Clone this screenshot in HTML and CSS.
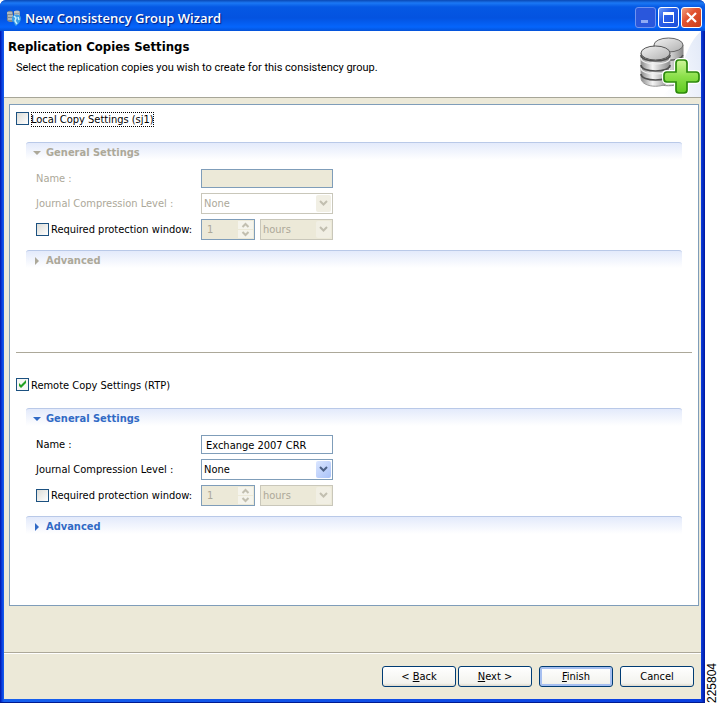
FILE: index.html
```html
<!DOCTYPE html>
<html lang="en">
<head>
<meta charset="utf-8">
<title>New Consistency Group Wizard</title>
<link rel="stylesheet" href="styles.css">
</head>
<body>
<main class="window">
  <header class="titlebar">
    <svg class="app-icon" viewBox="0 0 16 16" aria-hidden="true">
      <path d="M1 3c0-3 6-3 6 0v8c0 2-6 1-6-1z" fill="#7f8a92"/>
      <path d="M8 2c0-2 6-2 6 0v6H8z" fill="#98a2a8"/>
      <path d="M1 3h5M8 2h5M2 6h5M9 5h4M2 9h4" stroke="#dfe4e6" stroke-width="1.200"/>
      <path d="M6 8c0-4 8-5 9 0 0 4-3 6-5 8-2-1-1-4-4-5z" fill="#3a9fe6"/>
      <path d="M8 6l2 2-1 3 2 3M12 7l1 3" stroke="#c9f0ff" stroke-width="1.500" fill="none"/>
    </svg>
    <h1 class="title">New Consistency Group Wizard</h1>
    <div class="window-buttons">
      <button class="wb wb-min" aria-label="Minimize" disabled><svg viewBox="0 0 19 19"><path d="M5 12h7v3H5z" fill="#8fabf5"/></svg></button>
      <button class="wb" aria-label="Maximize"><svg viewBox="0 0 19 19"><path d="M4 4h11v11H4zM5 7v7h9V7z" fill="#fff" fill-rule="evenodd"/></svg></button>
      <button class="wb wb-close" aria-label="Close"><svg viewBox="0 0 19 19"><path d="M5 5l9 9M14 5l-9 9" stroke="#fff" stroke-width="2.200"/></svg></button>
    </div>
  </header>

  <section class="banner">
    <div class="banner-text">
      <h2 class="banner-title">Replication Copies Settings</h2>
      <p class="banner-note">Select the replication copies you wish to create for this consistency group.</p>
    </div>
    <svg class="banner-art" viewBox="0 0 72 66" aria-hidden="true">
      <defs>
        <linearGradient id="metal"><stop offset="0" stop-color="#8c8c8c"/><stop offset=".4" stop-color="#f4f4f4"/><stop offset="1" stop-color="#8a8a8a"/></linearGradient>
        <linearGradient id="lid" x2="1" y2="1"><stop offset="0" stop-color="#f2f2f2"/><stop offset="1" stop-color="#b0b0b0"/></linearGradient>
        <linearGradient id="plus" x2="0" y2="1"><stop offset="0" stop-color="#d0f59a"/><stop offset=".5" stop-color="#8be04a"/><stop offset="1" stop-color="#5fc91f"/></linearGradient>
        <linearGradient id="sky" x1="1" y1=".2" x2="0" y2=".6"><stop offset="0" stop-color="#e3eaf8"/><stop offset="1" stop-color="#fff"/></linearGradient>
      </defs>
      <path d="M72 0v66H28C55 58 50 20 72 0z" fill="url(#sky)"/>
      <path d="M25 14v34c0 9 29 9 29 0V14z" fill="url(#metal)" stroke="#888"/>
      <path d="M25 24c3 7 26 7 29 0M25 36c3 7 26 7 29 0" fill="none" stroke="#555" stroke-width="1.500"/>
      <ellipse cx="39.500" cy="14" rx="14.500" ry="7" fill="url(#lid)" stroke="#666"/>
      <path d="M12 22v25c0 11 29 11 29 0V22z" fill="url(#metal)" stroke="#999"/>
      <path d="M12 24c0 8 29 8 29 0M12 34c0 8 29 8 29 0M12 43c0 8 29 8 29 0" fill="none" stroke="#505050" stroke-width="1.700"/>
      <path d="M12 27c0 8 29 8 29 0M12 37c0 8 29 8 29 0" fill="none" stroke="#eee" stroke-width="1.200"/>
      <ellipse cx="26.500" cy="22" rx="14.500" ry="7" fill="url(#lid)" stroke="#555"/>
      <path d="M50 29h5q3 0 3 3v9h9q3 0 3 3v4q0 3-3 3h-9v8q0 3-3 3h-5q-3 0-3-3v-8h-9q-3 0-3-3v-4q0-3 3-3h9v-9q0-3 3-3z" fill="none" stroke="#fff" stroke-width="4"/>
      <path d="M50 29h5q3 0 3 3v9h9q3 0 3 3v4q0 3-3 3h-9v8q0 3-3 3h-5q-3 0-3-3v-8h-9q-3 0-3-3v-4q0-3 3-3h9v-9q0-3 3-3z" fill="url(#plus)" stroke="#2c8a0c" stroke-width="1.700"/>
    </svg>
  </section>

  <div class="content">
    <div class="panel">
      <section class="copy">
        <div class="copy-head">
          <input class="check" type="checkbox" id="local">
          <label class="focus-label" for="local">Local Copy Settings (sj1)</label>
        </div>
        <div class="settings off">
          <button class="bar"><svg class="twist" viewBox="0 0 8 8"><path d="M0 2h8L4 6z"/></svg>General Settings</button>
          <div class="fields">
            <div class="row">
              <label class="caption" for="l-name">Name :</label>
              <input class="text" id="l-name" type="text" disabled>
            </div>
            <div class="row">
              <label class="caption" for="l-level">Journal Compression Level :</label>
              <span class="combo"><select id="l-level" disabled><option>None</option></select><svg class="arrow" viewBox="0 0 15 17"><path d="M4 6l3.500 3.500L11 6"/></svg></span>
            </div>
            <div class="row">
              <span class="caption check-caption"><input class="check" type="checkbox" id="l-window"><label for="l-window">Required protection window:</label></span>
              <span class="pair">
                <span class="spin"><input type="number" value="1" aria-label="Protection window length" disabled><svg class="steps" viewBox="0 0 15 17"><path d="M0 0h15v8H0zM0 9h15v8H0z" class="step-face"/><path d="M4.500 6l3-3 3 3M4.500 11l3 3 3-3" class="step-mark"/></svg></span>
                <span class="combo dim"><select aria-label="Protection window unit" disabled><option>hours</option></select><svg class="arrow" viewBox="0 0 15 17"><path d="M4 6l3.500 3.500L11 6"/></svg></span>
              </span>
            </div>
          </div>
          <button class="bar"><svg class="twist" viewBox="0 0 8 8"><path d="M2 0v8l4-4z"/></svg>Advanced</button>
        </div>
      </section>

      <hr class="divider">

      <section class="copy">
        <div class="copy-head">
          <input class="check" type="checkbox" id="remote" checked>
          <label for="remote">Remote Copy Settings (RTP)</label>
        </div>
        <div class="settings">
          <button class="bar"><svg class="twist" viewBox="0 0 8 8"><path d="M0 2h8L4 6z"/></svg>General Settings</button>
          <div class="fields">
            <div class="row">
              <label class="caption" for="r-name">Name :</label>
              <input class="text" id="r-name" type="text" value="Exchange 2007 CRR">
            </div>
            <div class="row">
              <label class="caption" for="r-level">Journal Compression Level :</label>
              <span class="combo"><select id="r-level"><option>None</option></select><svg class="arrow live" viewBox="0 0 15 17"><path d="M4 6l3.500 3.500L11 6"/></svg></span>
            </div>
            <div class="row">
              <span class="caption check-caption"><input class="check" type="checkbox" id="r-window"><label for="r-window">Required protection window:</label></span>
              <span class="pair">
                <span class="spin"><input type="number" value="1" aria-label="Protection window length" disabled><svg class="steps" viewBox="0 0 15 17"><path d="M0 0h15v8H0zM0 9h15v8H0z" class="step-face"/><path d="M4.500 6l3-3 3 3M4.500 11l3 3 3-3" class="step-mark"/></svg></span>
                <span class="combo dim"><select aria-label="Protection window unit" disabled><option>hours</option></select><svg class="arrow" viewBox="0 0 15 17"><path d="M4 6l3.500 3.500L11 6"/></svg></span>
              </span>
            </div>
          </div>
          <button class="bar"><svg class="twist" viewBox="0 0 8 8"><path d="M2 0v8l4-4z"/></svg>Advanced</button>
        </div>
      </section>
    </div>
  </div>

  <footer class="footer">
    <div class="nav">
      <button class="btn">&lt; <u>B</u>ack</button>
      <button class="btn"><u>N</u>ext &gt;</button>
    </div>
    <button class="btn btn-default"><u>F</u>inish</button>
    <button class="btn">Cancel</button>
  </footer>
</main>
<aside class="figure-id">225804</aside>
</body>
</html>
```
FILE: styles.css
```css
* { box-sizing: border-box; }

body {
  margin: 0;
  min-height: 100vh;
  display: flex;
  background: #fff;
  color: #000;
  font: 11px/16px "DejaVu Sans Condensed", "DejaVu Sans", sans-serif;
  padding-bottom: 1px;
}

button, input, select { font: inherit; color: inherit; margin: 0; }
h1, h2, p { margin: 0; }

.window {
  flex: 1;
  display: flex;
  flex-direction: column;
  background: linear-gradient(90deg, #0014a8 0, #0a3fe0 2px, #1660ee 4px, #0a3fe0 calc(100% - 4px), #0018a0 100%);
  padding: 0 4px 3px;
  border-bottom: 1px solid #001a90;
  border-radius: 6px 6px 0 0;
}

.titlebar {
  height: 31px;
  margin: 0 -4px;
  padding: 4px 3px 0 6px;
  display: flex;
  align-items: center;
  gap: 3px;
  border-radius: 6px 6px 0 0;
  background: linear-gradient(#0a48b4 0, #1b78f5 3px, #0558e4 7px, #0453e0 18px, #0565fc 27px, #0352d8 100%);
}
.app-icon { width: 16px; height: 16px; }
.title {
  flex: 1;
  font: 600 13px/20px "Open Sans", sans-serif;
  color: #fff;
  text-shadow: 1px 1px 1px #001c80;
}
.window-buttons { display: flex; gap: 2px; }
.wb {
  width: 21px;
  height: 21px;
  padding: 0;
  border: 1px solid #fff;
  border-radius: 3px;
  background: linear-gradient(135deg, #6f9bf8, #2a5ee8 40%, #1c4fd8);
}
.wb svg { display: block; width: 19px; height: 19px; }
.wb-min { border-color: #6f93f0; background: #2a57dc; }
.wb-close { background: linear-gradient(135deg, #f0a080, #e25432 40%, #c83c18); }

.banner {
  display: flex;
  height: 67px;
  background: #fff;
  border-bottom: 1px solid #a7a698;
}
.banner-text { flex: 1; padding: 7px 0 0 4px; }
.banner-title { font: bold 13px/18px "DejaVu Sans Condensed", sans-serif; }
.banner-note { padding: 4px 0 0 8px; font-family: Roboto, sans-serif; }
.banner-art { width: 72px; height: 66px; }

.content {
  flex: 1;
  display: flex;
  padding: 6px 2px 46px 5px;
  background: #ece9d8;
  border-bottom: 1px solid #aca899;
}
.panel {
  flex: 1;
  padding: 6px;
  background: #fff;
  border: 1px solid #7f9db9;
}

.copy-head {
  display: flex;
  align-items: flex-start;
  gap: 2px;
  height: 16px;
  padding-top: 1px;
  line-height: 15px;
}
.focus-label { outline: 1px dotted #000; outline-offset: -1px; }

.check {
  appearance: none;
  width: 13px;
  height: 13px;
  border: 1px solid #1c5180;
  background: linear-gradient(135deg, #dcdcd7, #fff);
}
.check:checked {
  background: url("data:image/svg+xml,%3Csvg xmlns='http://www.w3.org/2000/svg' viewBox='0 0 11 11'%3E%3Cpath d='M2 4v3l2 2 5-5V1L4 6z' fill='%2321a121'/%3E%3C/svg%3E") #f6f6f4;
}

.settings { margin: 15px 10px 0; }
.bar {
  display: flex;
  align-items: center;
  gap: 5px;
  width: 100%;
  height: 18px;
  padding: 2px 0 0 7px;
  border: 0;
  border-top: 1px solid #b9c9e8;
  border-radius: 3px 3px 0 0;
  background: linear-gradient(#e3eafb, #fff);
  color: #316ac5;
  font-weight: bold;
}
.twist { width: 8px; height: 8px; fill: currentColor; }
.off .bar { color: #aca899; }

.fields { display: grid; gap: 5px; padding: 9px 10px 10px; }
.row { display: grid; grid-template-columns: 165px 132px; align-items: center; }
.off label.caption { color: #aca899; }
.check-caption { display: flex; align-items: center; gap: 2px; white-space: nowrap; }
.pair { display: grid; grid-template-columns: 54px 73px; gap: 5px; }

.text {
  width: 100%;
  height: 19px;
  padding: 1px 4px 0;
  border: 1px solid #7f9db9;
  background: #fff;
}
.text:disabled { background: #ece9d8; }

.combo { position: relative; display: block; height: 21px; }
.combo select {
  appearance: none;
  width: 100%;
  height: 21px;
  padding: 1px 18px 0 2px;
  border: 1px solid #7f9db9;
  border-radius: 0;
  background: #fff;
}
.combo select:disabled { opacity: 1; border-color: #c9c7ba; color: #aca899; }
.dim select:disabled { background: #ece9d8; }
.arrow {
  position: absolute;
  top: 2px;
  right: 2px;
  width: 15px;
  height: 17px;
  background: #f1efe4;
  border-radius: 2px;
  fill: none;
  stroke: #c2bfb0;
  stroke-width: 2;
  pointer-events: none;
}
.arrow.live { background: linear-gradient(135deg, #dbe6ff, #a9c2f8); stroke: #4d6185; }

.spin {
  display: flex;
  align-items: center;
  height: 21px;
  padding-right: 1px;
  border: 1px solid #7f9db9;
  background: #ece9d8;
}
.spin input {
  appearance: textfield;
  flex: 1;
  min-width: 0;
  padding: 0 0 0 5px;
  border: 0;
  background: none;
  color: #aca899;
}
.spin input::-webkit-inner-spin-button { appearance: none; }
.steps { width: 15px; height: 17px; }
.step-face { fill: #f5f4ec; }
.step-mark { fill: none; stroke: #c2bfb0; stroke-width: 2; }

.divider { margin: 84px 0 24px; border: 0; border-top: 1px solid #aca899; }

.footer {
  display: flex;
  justify-content: flex-end;
  gap: 7px;
  padding: 12px 7px 12px;
  border-top: 1px solid #fff;
  background: #ece9d8;
}
.nav { display: flex; gap: 2px; }
.btn {
  width: 74px;
  height: 21px;
  padding: 1px 0 0;
  border: 1px solid #003c74;
  border-radius: 3px;
  background: linear-gradient(#fff, #f3f3ee 85%, #dcd8cc);
}
.btn-default { box-shadow: inset 0 0 0 2px #a6bff0; }

.figure-id {
  width: 16px;
  writing-mode: vertical-rl;
  transform: rotate(180deg);
  font: 12px/14px "Liberation Sans", sans-serif;
}
```
